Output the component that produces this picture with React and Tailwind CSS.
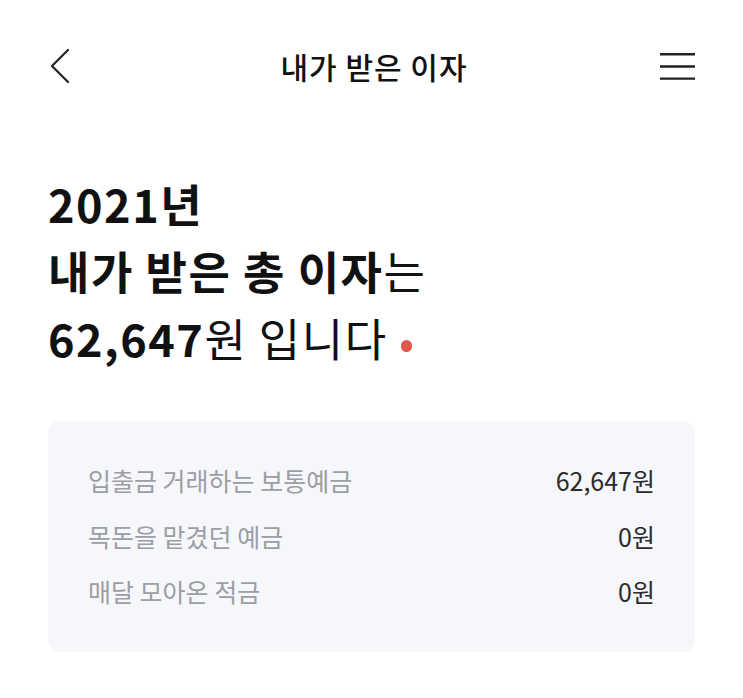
import React from 'react';

const rows = [
    { label: '입출금 거래하는 보통예금', amount: '62,647원' },
    { label: '목돈을 맡겼던 예금', amount: '0원' },
    { label: '매달 모아온 적금', amount: '0원' },
];

const App = () => {
    return (
        <div className="min-h-screen bg-white text-[#111] font-['Noto_Sans_CJK_KR',sans-serif]">
            {/* top bar */}
            <div className="flex h-[132px] items-center justify-between px-12">
                <button className="flex h-10 w-10 items-center">
                    <svg width="24" height="36" viewBox="0 0 24 36" fill="none">
                        <path d="M20 2 L4 18 L20 34" stroke="#222" strokeWidth="2.2" strokeLinecap="round" strokeLinejoin="round" />
                    </svg>
                </button>
                <h1 className="text-[30px] font-medium leading-none tracking-[1px]">내가 받은 이자</h1>
                <button className="flex h-10 w-[35px] items-center">
                    <svg width="36" height="28" viewBox="0 0 36 28" fill="none">
                        <path d="M0 2 H36 M0 14.5 H36 M0 27 H36" stroke="#222" strokeWidth="2.5" />
                    </svg>
                </button>
            </div>

            {/* summary */}
            <div className="px-12 pt-[38px] text-[45px] leading-[67px] tracking-[1.5px]">
                <div className="font-bold">2021년</div>
                <div>
                    <span className="font-bold">내가 받은 총 이자</span>는
                </div>
                <div className="flex items-center">
                    <span className="font-bold">62,647</span>
                    <span>원 입니다</span>
                    <span className="ml-[13px] mt-[17px] h-[12px] w-[11px] rounded-full bg-[#e0574f]" />
                </div>
            </div>

            {/* breakdown card */}
            <div className="mx-12 mt-[50px] rounded-xl bg-[#f6f7fa] px-10 py-[32px]">
                {rows.map((row, index) => (
                    <div key={index} className="flex h-[55.5px] items-center justify-between text-[25px]">
                        <span className="text-[#9b9ea4]">{row.label}</span>
                        <span className="text-[#2b2b2b]">{row.amount}</span>
                    </div>
                ))}
            </div>
        </div>
    );
};

export default App;
